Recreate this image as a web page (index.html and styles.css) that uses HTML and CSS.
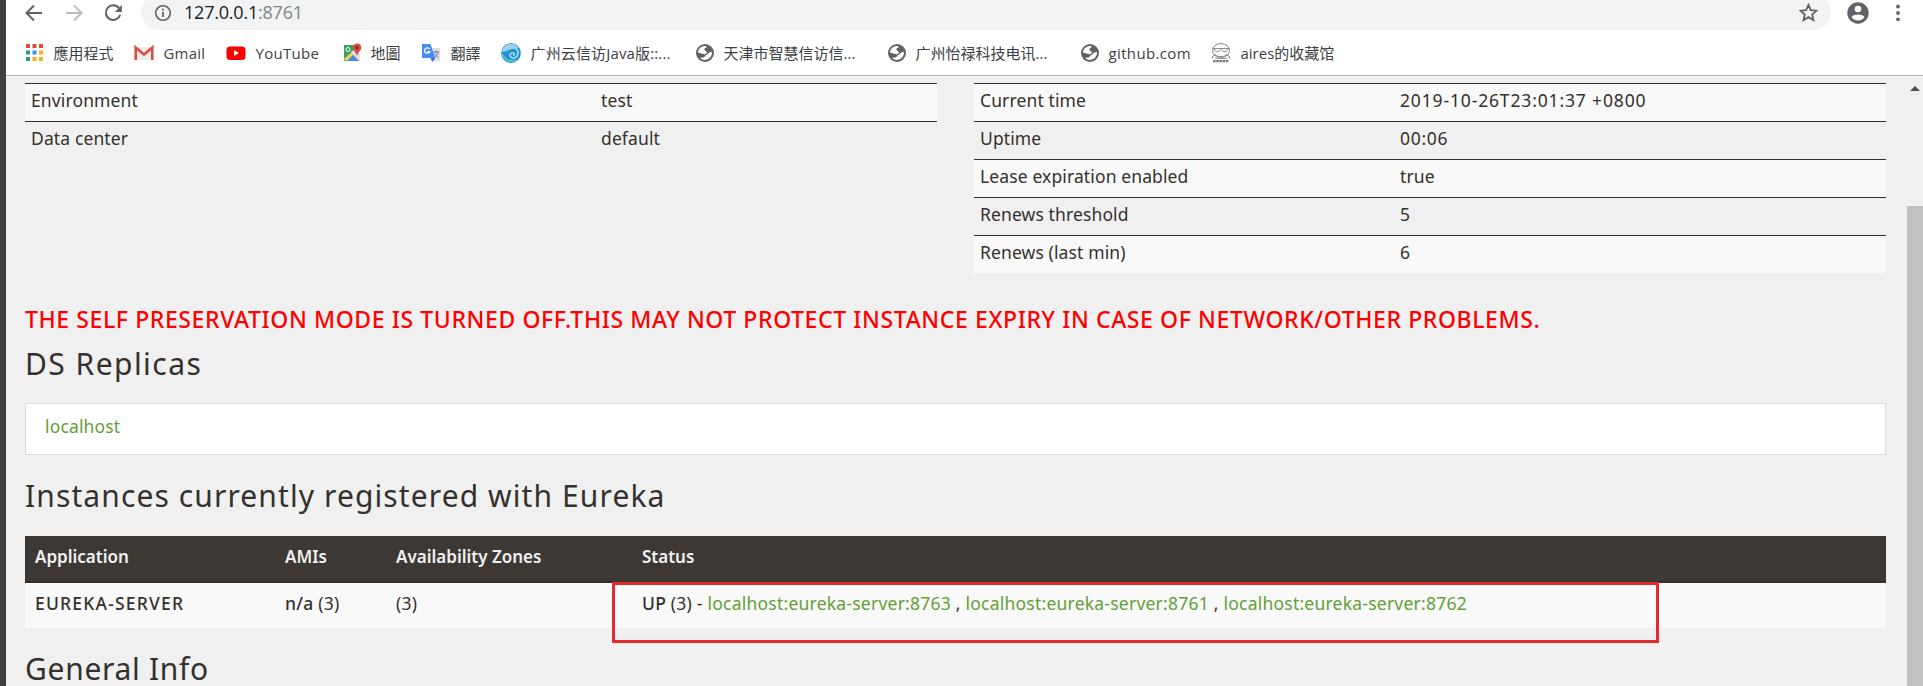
FILE: index.html
```html
<!DOCTYPE html>
<html lang="zh-Hant">
<head>
<meta charset="utf-8">
<title>Eureka</title>
<link rel="stylesheet" href="styles.css">
</head>
<body>
<svg width="0" height="0" class="defs">
  <symbol id="globe" viewBox="0 0 20 20">
    <circle cx="10" cy="10" r="9" fill="#5f6368"/>
    <path d="M3 9.800C3 6 6 3 10.500 3L11.500 3.600C11.500 5.300 9.500 5 9.300 6.500 9.200 7.800 11.500 7.600 11.800 9.300 12 11 10.200 11.500 9 11.200 7 10.800 6 10.300 3 9.800Z" fill="#fff"/>
    <path d="M16.900 8.500C17.500 13 14 17 9.500 17 7.500 16.800 6 16 5 14.800L8.500 14.500C10 14.300 9.500 12.800 11 12.300 12.500 12 12.700 10.500 14 9.800 15 9.200 16 9.500 16.900 8.500Z" fill="#fff"/>
  </symbol>
</svg>
<div class="window">
  <div class="edge"></div>
  <div class="browser">
    <div class="toolbar">
      <svg class="nav back" viewBox="0 0 18 18"><path d="M17 9H2M9 1.500 1.500 9 9 16.500" fill="none" stroke="#5f6368" stroke-width="2"/></svg>
      <svg class="nav forward" viewBox="0 0 18 18"><path d="M1 9H16M9 1.500 16.500 9 9 16.500" fill="none" stroke="#babcbe" stroke-width="2"/></svg>
      <svg class="nav reload" viewBox="0 0 18 18"><path d="M15 4.200A7.300 7.300 0 1 0 16.200 10.800" fill="none" stroke="#5f6368" stroke-width="2"/><path d="M17.800 1V8H10.800Z" fill="#5f6368"/></svg>
      <div class="omnibox">
        <svg class="info" viewBox="0 0 18 18"><circle cx="9" cy="9" r="7.300" fill="none" stroke="#5f6368" stroke-width="1.600"/><path d="M9 8V13M9 4.800V6.600" stroke="#5f6368" stroke-width="1.800"/></svg>
        <span class="host">127.0.0.1</span><span class="port">:8761</span>
        <svg class="star" viewBox="0 0 18 18"><path d="M9 1.800 11.200 6.800 16.600 7.300 12.500 10.900 13.700 16.200 9 13.400 4.300 16.200 5.500 10.900 1.400 7.300 6.800 6.800Z" fill="none" stroke="#5f6368" stroke-width="1.700"/></svg>
      </div>
      <svg class="avatar" viewBox="0 0 22 22"><circle cx="11" cy="11" r="10.700" fill="#5f6368"/><circle cx="11" cy="7" r="3.300" fill="#fff"/><path d="M4.600 15.200C5.400 11.600 16.600 11.600 17.400 15.200 14 19.600 8 19.600 4.600 15.200Z" fill="#fff"/></svg>
      <svg class="dots" viewBox="0 0 4 18"><circle cx="2" cy="2.500" r="1.900"/><circle cx="2" cy="9" r="1.900"/><circle cx="2" cy="15.300" r="1.900"/></svg>
    </div>
    <div class="bookmarks">
      <div class="mark w108"><svg viewBox="0 0 20 20"><path d="M0 1h4v4H0zM6.500 1h4v4h-4zM13 1h4v4h-4z" fill="#e04a3f"/><path d="M0 7.500h4v4H0zM0 14h4v4H0z" fill="#31a066"/><path d="M6.500 7.500h4v4h-4z" fill="#3b8df0"/><path d="M13 7.500h4v4h-4zM6.500 14h4v4h-4zM13 14h4v4h-4z" fill="#f2b01e"/></svg><span class="cjk">應用程式</span></div>
      <div class="mark w92"><svg viewBox="0 0 20 20"><path d="M1 4h18v13H1z" fill="#ececec"/><path d="M1.700 17V4.500L10 11.500 18.300 4.500V17" fill="none" stroke="#dc4c41" stroke-width="2.600"/></svg><span class="latin">Gmail</span></div>
      <div class="mark w117"><svg viewBox="0 0 20 20"><rect x=".5" y="3.500" width="19" height="13.500" rx="3.500" fill="#f00"/><path d="M8 7.200V13L13 10.100Z" fill="#fff"/></svg><span class="latin youtube">YouTube</span></div>
      <div class="mark w78"><svg viewBox="0 0 20 20"><path d="M1 2h14v6L6 18H1z" fill="#35a264"/><path d="M1 16 12 6 17 12v5.500H2z" fill="#f7cf46"/><path d="M4 18 10 12 16 18z" fill="#4285f4"/><path d="M8 9 17 18V11L12 6z" fill="#d9e3ef"/><circle cx="5" cy="6.500" r="2" fill="none" stroke="#fff"/><path d="M14 0.500C11 .5 9.500 2.700 9.700 5 10 8 13.200 9 14 13 14.800 9 18 8 18.300 5 18.500 2.700 17 .5 14 .5Z" fill="#df4a3f"/><circle cx="14" cy="4.700" r="1.700" fill="#7f231f"/></svg><span class="cjk">地圖</span></div>
      <div class="mark w80"><svg viewBox="0 0 20 20"><path d="M8 5h11v13.500H11z" fill="#dcdfe3"/><path d="M1 1h8.500l4.800 14H1z" fill="#4a8af4"/><path d="M9.500 15h4.800l-3 3.800z" fill="#3367d6"/><path d="M8.600 6.200A2.700 2.700 0 1 0 8.700 8.700H6.300" fill="none" stroke="#fff" stroke-width="1.300"/><path d="M12.500 9h5.500M15 7.500V9M17 9C16.500 12 14.800 13.500 13.500 14.500M13.500 10.500 17.500 15" fill="none" stroke="#6d7c88"/></svg><span class="cjk wide">翻譯</span></div>
      <div class="mark w194"><svg viewBox="0 0 20 20"><circle cx="10" cy="10" r="9.900" fill="#2b8fcb"/><path d="M2 5.500C5-1 15-1 18 5.500 13 3 7 8 1 8Z" fill="#a9c9e6"/><path d="M1 8C7 8 9 3.800 14 5 18 6.500 18 14 13 15 9 15.600 7.500 11 11 9.800 14 9.500 14 12.500 12 12.500" fill="none" stroke="#8be0f0" stroke-width="1.700"/><path d="M1 11C4 18 10 19 15 17" fill="none" stroke="#58c8e5" stroke-width="1.800"/></svg><span class="zh java">广州云信访Java版::...</span></div>
      <div class="mark w192"><svg viewBox="0 0 20 20"><use href="#globe"/></svg><span class="zh">天津市智慧信访信...</span></div>
      <div class="mark w193"><svg viewBox="0 0 20 20"><use href="#globe"/></svg><span class="zh">广州怡禄科技电讯...</span></div>
      <div class="mark w131"><svg viewBox="0 0 20 20"><use href="#globe"/></svg><span class="github">github.com</span></div>
      <div class="mark w130"><svg viewBox="0 0 20 20"><g fill="none" stroke="#858585"><ellipse cx="10" cy="7.500" rx="8.500" ry="6.900"/><path d="M1.500 5.600H18.500"/><path d="M3 6C4 9.500 8.500 9.500 9.500 6.500M10.500 6.500C11.500 9.500 16 9.500 17 6M4 11.500C7 14.500 13 14.500 16 11.500M1.500 15.500V13.500L4 12M18.500 15.500V13.500L16 12M4 15.300H16"/></g><path d="M2 18.200H18" stroke="#777" stroke-width="2.200" stroke-dasharray="2.600 .6"/></svg><span class="zh aires">aires的收藏馆</span></div>
    </div>
    <div class="viewport">
      <main class="page">
        <div class="status-grid">
          <div class="info-table left">
            <div class="row"><span>Environment</span><span>test</span></div>
            <div class="row"><span>Data center</span><span>default</span></div>
          </div>
          <div class="info-table right">
            <div class="row"><span>Current time</span><span class="time">2019-10-26T23:01:37 +0800</span></div>
            <div class="row"><span>Uptime</span><span class="uptime">00:06</span></div>
            <div class="row"><span>Lease expiration enabled</span><span>true</span></div>
            <div class="row"><span>Renews threshold</span><span>5</span></div>
            <div class="row"><span>Renews (last min)</span><span>6</span></div>
          </div>
        </div>
        <h4 class="warning">THE SELF PRESERVATION MODE IS TURNED OFF.THIS MAY NOT PROTECT INSTANCE EXPIRY IN CASE OF NETWORK/OTHER PROBLEMS.</h4>
        <h1 class="title ds">DS Replicas</h1>
        <div class="replicas"><a>localhost</a></div>
        <h1 class="title inst">Instances currently registered with Eureka</h1>
        <div class="instances">
          <div class="line head"><span>Application</span><span>AMIs</span><span>Availability Zones</span><span>Status</span></div>
          <div class="line body"><b class="app">EUREKA-SERVER</b><span><b>n/a</b> (3)</span><span>(3)</span><span class="links"><b>UP</b> (3) - <a>localhost:eureka-server:8763</a> , <a>localhost:eureka-server:8761</a> , <a>localhost:eureka-server:8762</a></span></div>
          <div class="highlight"></div>
        </div>
        <h1 class="title gen">General Info</h1>
      </main>
      <div class="scrollbar"><svg class="up" viewBox="0 0 10 5"><path d="M0 5 5 0 10 5Z" fill="#505050"/></svg><div class="thumb"></div></div>
    </div>
  </div>
</div>
</body>
</html>
```

FILE: styles.css
```css
* { box-sizing: border-box; }
body { margin: 0; background: #f0f0f0; font-family: "Noto Sans", "Open Sans", sans-serif; color: #34302d; }
.defs { position: absolute; }
.window { display: flex; width: 1923px; height: 686px; overflow: hidden; }
.edge { width: 6px; background: #3c4043; flex: none; }
.browser { flex: 1; min-width: 0; display: flex; flex-direction: column; background: #fff; }

.toolbar { height: 30px; flex: none; display: flex; align-items: flex-end; overflow: hidden; }
.nav { width: 18px; height: 18px; margin-bottom: 8px; flex: none; }
.back { margin-left: 19px; }
.forward { margin-left: 22px; }
.reload { margin-left: 21px; }
.omnibox { display: flex; align-items: center; width: 1690px; height: 36px; flex: none; margin-left: 19px; border-radius: 18px; background: #f1f3f4; font: 18px/24px "Open Sans", sans-serif; }
.info { width: 18px; height: 18px; margin: 1px 12px 0 13px; }
.host { color: #202124; letter-spacing: -0.22px; }
.port { color: #80868b; letter-spacing: -0.2px; }
.star { width: 19px; height: 19px; margin: 0 13px 0 auto; }
.avatar { width: 22px; height: 22px; margin: 0 0 6px 16px; flex: none; }
.dots { width: 4px; height: 18px; margin: 0 0 8px 27px; fill: #5f6368; flex: none; }

.bookmarks { height: 46px; flex: none; display: flex; align-items: center; padding-left: 20px; border-bottom: 1px solid #b6b4b6; font: 15px/20px "Open Sans", "Noto Sans CJK TC", sans-serif; color: #3c4043; }
.mark { display: flex; align-items: center; gap: 9px; white-space: nowrap; flex: none; }
.mark svg { width: 20px; height: 20px; flex: none; margin-left: -0.5px; }
.cjk { margin-left: -1px; font-family: "Noto Sans CJK TC", sans-serif; }
.wide { margin-left: 1px; }
.latin { margin-left: 1px; letter-spacing: 0.2px; }
.youtube { letter-spacing: 0.3px; }
.github { letter-spacing: 0.35px; }
.zh { font-family: "Open Sans", "Noto Sans CJK SC", sans-serif; }
.java { margin-left: 1px; letter-spacing: 0.15px; }
.aires { margin-left: 1px; }
.w78 { width: 78px; }
.w80 { width: 80px; }
.w92 { width: 92px; }
.w108 { width: 108px; }
.w117 { width: 117px; }
.w130 { width: 130px; }
.w131 { width: 131px; }
.w192 { width: 192px; }
.w193 { width: 193px; }
.w194 { width: 194px; }

.viewport { flex: 1; min-height: 0; display: flex; border-top: 1px solid #fafafa; background: #f0f0f0; }
.page { flex: 1; min-width: 0; padding: 6px 21px 0 19px; overflow: hidden; }
.status-grid { display: grid; grid-template-columns: 912px 912px; gap: 37px; height: 190px; align-items: start; }
.row { display: grid; height: 38px; border-top: 1px solid #34302d; padding: 4px 6px 0; font-size: 17.5px; line-height: 24px; letter-spacing: 0.12px; }
.row:nth-child(odd) { background: #f9f9f9; }
.left .row { grid-template-columns: 570px 1fr; }
.right .row { grid-template-columns: 420px 1fr; }
.time { letter-spacing: 0.85px; }
.uptime { letter-spacing: 0.7px; }
.warning { margin: 31px 0 0; height: 30px; font-size: 23px; line-height: 30px; font-weight: 500; letter-spacing: 0.6px; color: #f00; white-space: nowrap; }
.title { margin: 0; font-size: 30px; line-height: 40px; font-weight: 400; white-space: nowrap; }
.ds { margin-top: 10px; height: 59px; letter-spacing: 1.45px; }
.replicas { height: 52px; border: 1px solid #ddd; background: #fff; padding: 10px 19px; font-size: 17.5px; line-height: 24px; letter-spacing: 0.15px; }
a { color: #5fa134; }
.inst { margin-top: 21px; height: 60px; letter-spacing: 1.1px; }
.instances { position: relative; font-size: 17.5px; line-height: 24px; letter-spacing: 0.23px; }
.line { display: grid; grid-template-columns: 250px 111px 246px 1fr; padding: 0 10px; }
.head { height: 47px; padding-top: 9px; background: #3d3833; border-bottom: 2px solid #34302d; color: #f1f1f1; font-size: 17px; font-weight: 600; letter-spacing: 0; }
.body { height: 45px; padding-top: 8px; background: #f9f9f9; white-space: nowrap; }
b { font-weight: 500; }
.app { letter-spacing: 1.2px; }
.highlight { position: absolute; left: 587px; top: 46px; width: 1047px; height: 61px; border: 3px solid #e22a2f; }
.gen { margin-top: 24px; line-height: 33px; letter-spacing: 0.7px; }

.scrollbar { width: 16px; flex: none; display: flex; flex-direction: column; align-items: center; }
.up { width: 10px; height: 5px; margin: 9px 0 115px; flex: none; }
.thumb { width: 16px; flex: 1; background: #c1c1c1; }
```
